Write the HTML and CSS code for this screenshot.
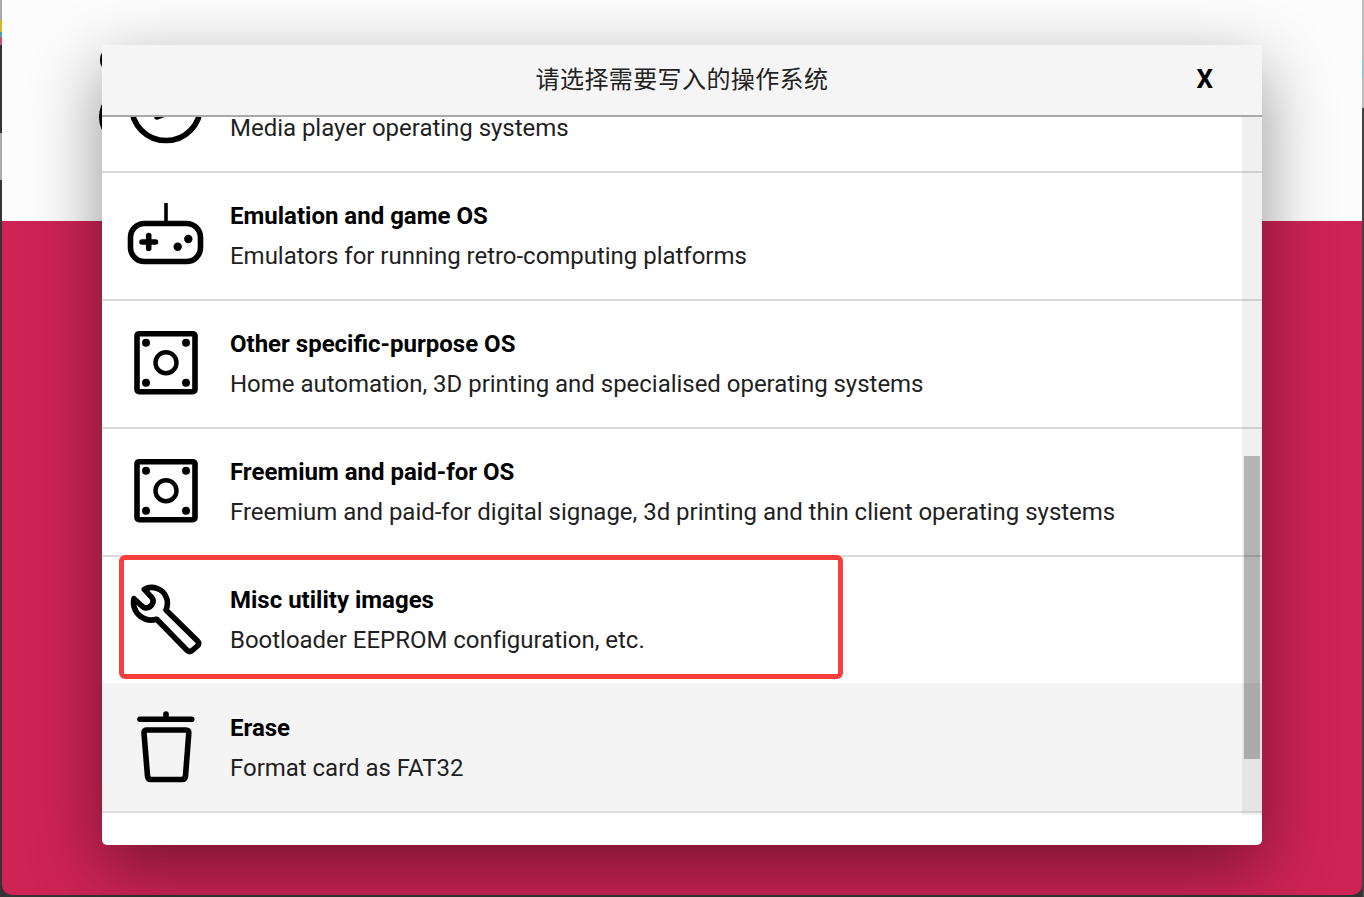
FILE: index.html
```html
<!DOCTYPE html>
<html lang="zh-CN">
<head>
    <meta charset="UTF-8">
    <meta name="viewport" content="width=device-width, initial-scale=1.0">
    <title>Raspberry Pi Imager</title>
    <link rel="stylesheet" href="styles.css">
</head>
<body>
    <div class="app-window">
        <div class="app-top">
            <svg class="app-logo" width="10" height="90" viewBox="0 0 10 90">
                <circle cx="16" cy="10" r="14"/>
                <circle cx="31" cy="67" r="30"/>
            </svg>
        </div>
        <div class="app-bottom"></div>
    </div>

    <div class="overlay">
        <div class="dialog">
            <div class="dialog-header">
                <span class="dialog-title">请选择需要写入的操作系统</span>
                <span class="dialog-close">X</span>
            </div>
            <div class="os-list">
                <div class="os-row os-row-first">
                    <svg class="os-icon" viewBox="0 0 80 80">
                        <circle class="line" cx="40" cy="38" r="34.5"/>
                        <path class="line" d="M31 30V49L52 41"/>
                    </svg>
                    <div class="os-text">
                        <div class="os-name">Media player OS</div>
                        <div class="os-desc">Media player operating systems</div>
                    </div>
                </div>
                <div class="os-row">
                    <svg class="os-icon" viewBox="0 0 80 80">
                        <rect class="line" x="4.5" y="27.5" width="70" height="38" rx="14"/>
                        <path class="antenna" d="M40 7V26"/>
                        <path class="line" d="M16 46H29.5M22.7 39.5V52.5"/>
                        <circle cx="62.3" cy="43" r="4.2"/>
                        <circle cx="51.7" cy="50.7" r="4.2"/>
                    </svg>
                    <div class="os-text">
                        <div class="os-name">Emulation and game OS</div>
                        <div class="os-desc">Emulators for running retro-computing platforms</div>
                    </div>
                </div>
                <div class="os-row">
                    <svg class="os-icon" viewBox="0 0 80 80">
                        <rect class="line" x="11" y="9.7" width="58" height="58" rx="2"/>
                        <circle class="thin" cx="40" cy="38.7" r="10.5"/>
                        <circle cx="20" cy="18.7" r="4"/>
                        <circle cx="60" cy="18.7" r="4"/>
                        <circle cx="20" cy="58.7" r="4"/>
                        <circle cx="60" cy="58.7" r="4"/>
                    </svg>
                    <div class="os-text">
                        <div class="os-name">Other specific-purpose OS</div>
                        <div class="os-desc">Home automation, 3D printing and specialised operating systems</div>
                    </div>
                </div>
                <div class="os-row">
                    <svg class="os-icon" viewBox="0 0 80 80">
                        <rect class="line" x="11" y="9.7" width="58" height="58" rx="2"/>
                        <circle class="thin" cx="40" cy="38.7" r="10.5"/>
                        <circle cx="20" cy="18.7" r="4"/>
                        <circle cx="60" cy="18.7" r="4"/>
                        <circle cx="20" cy="58.7" r="4"/>
                        <circle cx="60" cy="58.7" r="4"/>
                    </svg>
                    <div class="os-text">
                        <div class="os-name">Freemium and paid-for OS</div>
                        <div class="os-desc">Freemium and paid-for digital signage, 3d printing and thin client operating systems</div>
                    </div>
                </div>
                <div class="os-row os-row-marked">
                    <svg class="os-icon" viewBox="0 0 80 80">
                        <path class="line" d="M18.3 9.3C25.7 5 37.3 8.3 40.7 18.3C42.3 23.3 41.3 26.7 40 30L71.3 60.7C73.3 62.7 73.3 64 71.3 66L66.7 70C64.7 72 62.7 72 60.7 70L30.7 39.3C25.7 40.7 19 40 14 36C8 31.3 6.7 24 8 18.7L17.3 27.3C20.7 28.7 24 27.3 25.7 25C28 21.7 27.3 19.3 25.7 17.3Z"/>
                    </svg>
                    <div class="os-text">
                        <div class="os-name">Misc utility images</div>
                        <div class="os-desc">Bootloader EEPROM configuration, etc.</div>
                    </div>
                    <div class="mark-box"></div>
                </div>
                <div class="os-row os-row-hover">
                    <svg class="os-icon" viewBox="0 0 80 80">
                        <path class="line" d="M14 11.3H65.7"/>
                        <path class="line" d="M40 6V10"/>
                        <path class="line" d="M21 22H60Q63 22 62.8 25L59.5 68Q59 71.5 56 71.5H25Q22 71.5 21.5 68L18 25Q18 22 21 22Z"/>
                    </svg>
                    <div class="os-text">
                        <div class="os-name">Erase</div>
                        <div class="os-desc">Format card as FAT32</div>
                    </div>
                </div>
            </div>
            <div class="scroll-track">
                <div class="scroll-thumb"></div>
            </div>
        </div>
    </div>
</body>
</html>
```

FILE: styles.css
```css
body, html {
    margin: 0;
    padding: 0;
    height: 100%;
    overflow: hidden;
    font-family: 'Roboto', sans-serif;
    color: #000;
}

/* desktop peeking out around the window */
body {
    background-color: #333;
    background-image:
        linear-gradient(to bottom, #aaa 0, #aaa 20px, #d8b42c 20px, #d8b42c 32px, #4a9cc8 32px, #4a9cc8 37px, #c8506c 37px, #c8506c 45px, #333 45px, #333 133px, #aaa 133px, #aaa 180px, #333 180px),
        linear-gradient(to bottom, #bbb 0, #bbb 60px, #9cc4c8 60px, #9cc4c8 78px, #bbb 78px, #bbb 108px, #444 108px);
    background-size: 2px 100%;
    background-position: left top, right top;
    background-repeat: no-repeat;
    padding: 0 2px 2px;
    box-sizing: border-box;
}

.app-window {
    height: 100%;
    display: flex;
    flex-direction: column;
    border-radius: 0 0 10px 10px;
    overflow: hidden;
}

.app-top {
    height: 221px;
    box-sizing: border-box;
    padding: 50px 0 0 96px;
    background-color: #fcfcfc;
}

.app-logo {
    display: block;
}

.app-bottom {
    flex: 1;
    background-color: #cd2355;
}

.overlay {
    position: absolute;
    top: 0;
    left: 0;
    width: 100%;
    height: 100%;
}

.dialog {
    position: relative;
    margin: 45px 0 0 102px;
    width: 1160px;
    height: 800px;
    display: flex;
    flex-direction: column;
    background-color: #fff;
    border-radius: 0 0 5px 5px;
    box-shadow: 0 24px 70px rgba(0, 0, 0, 0.42);
    overflow: hidden;
}

.dialog-header {
    position: relative;
    z-index: 1;
    flex: none;
    height: 70px;
    display: flex;
    justify-content: center;
    align-items: center;
    background-color: #f5f5f5;
    border-bottom: 2px solid #a8a8a8;
}

.dialog-title {
    font-family: 'Noto Sans CJK SC', sans-serif;
    font-size: 24px;
    line-height: 28px;
    letter-spacing: 0.4px;
    margin-top: -5px;
    color: #222;
}

.dialog-close {
    position: absolute;
    right: 49px;
    top: 19px;
    font-size: 26px;
    font-weight: 700;
}

.os-list {
    flex: 1;
}

.os-row {
    height: 128px;
    box-sizing: border-box;
    display: flex;
    align-items: center;
    gap: 24px;
    padding-left: 24px;
    border-bottom: 2px solid #dcdcdc;
}

.os-row-first {
    margin-top: -72px;
}

.os-row-marked {
    position: relative;
    height: 126px;
    border-bottom: none;
}

.os-row-hover {
    height: 130px;
    padding-top: 2px;
    background-color: #f4f4f4;
}

.os-icon {
    flex: none;
    width: 80px;
    height: 80px;
    filter: blur(0.4px);
}

.line, .thin, .antenna {
    fill: none;
    stroke: #000;
    stroke-linejoin: round;
}

.line, .thin {
    stroke-linecap: round;
}

.line {
    stroke-width: 5.6;
}

.thin {
    stroke-width: 4.4;
}

.antenna {
    stroke-width: 3.6;
}

.os-name {
    font-size: 24px;
    line-height: 40px;
    font-weight: 700;
}

.os-desc {
    font-size: 24px;
    line-height: 40px;
    letter-spacing: -0.025px;
    color: #1f1f1f;
}

/* red annotation drawn over the screenshot */
.mark-box {
    position: absolute;
    top: -2px;
    left: 17px;
    width: 724px;
    height: 124px;
    box-sizing: border-box;
    border: 5px solid #f93e3e;
    border-radius: 6px;
}

.scroll-track {
    position: absolute;
    top: 72px;
    right: 0;
    width: 20px;
    height: 698px;
    background-color: rgba(0, 0, 0, 0.06);
}

.scroll-thumb {
    margin: 339px 2px 0;
    height: 303px;
    background-color: rgba(0, 0, 0, 0.25);
}
```
